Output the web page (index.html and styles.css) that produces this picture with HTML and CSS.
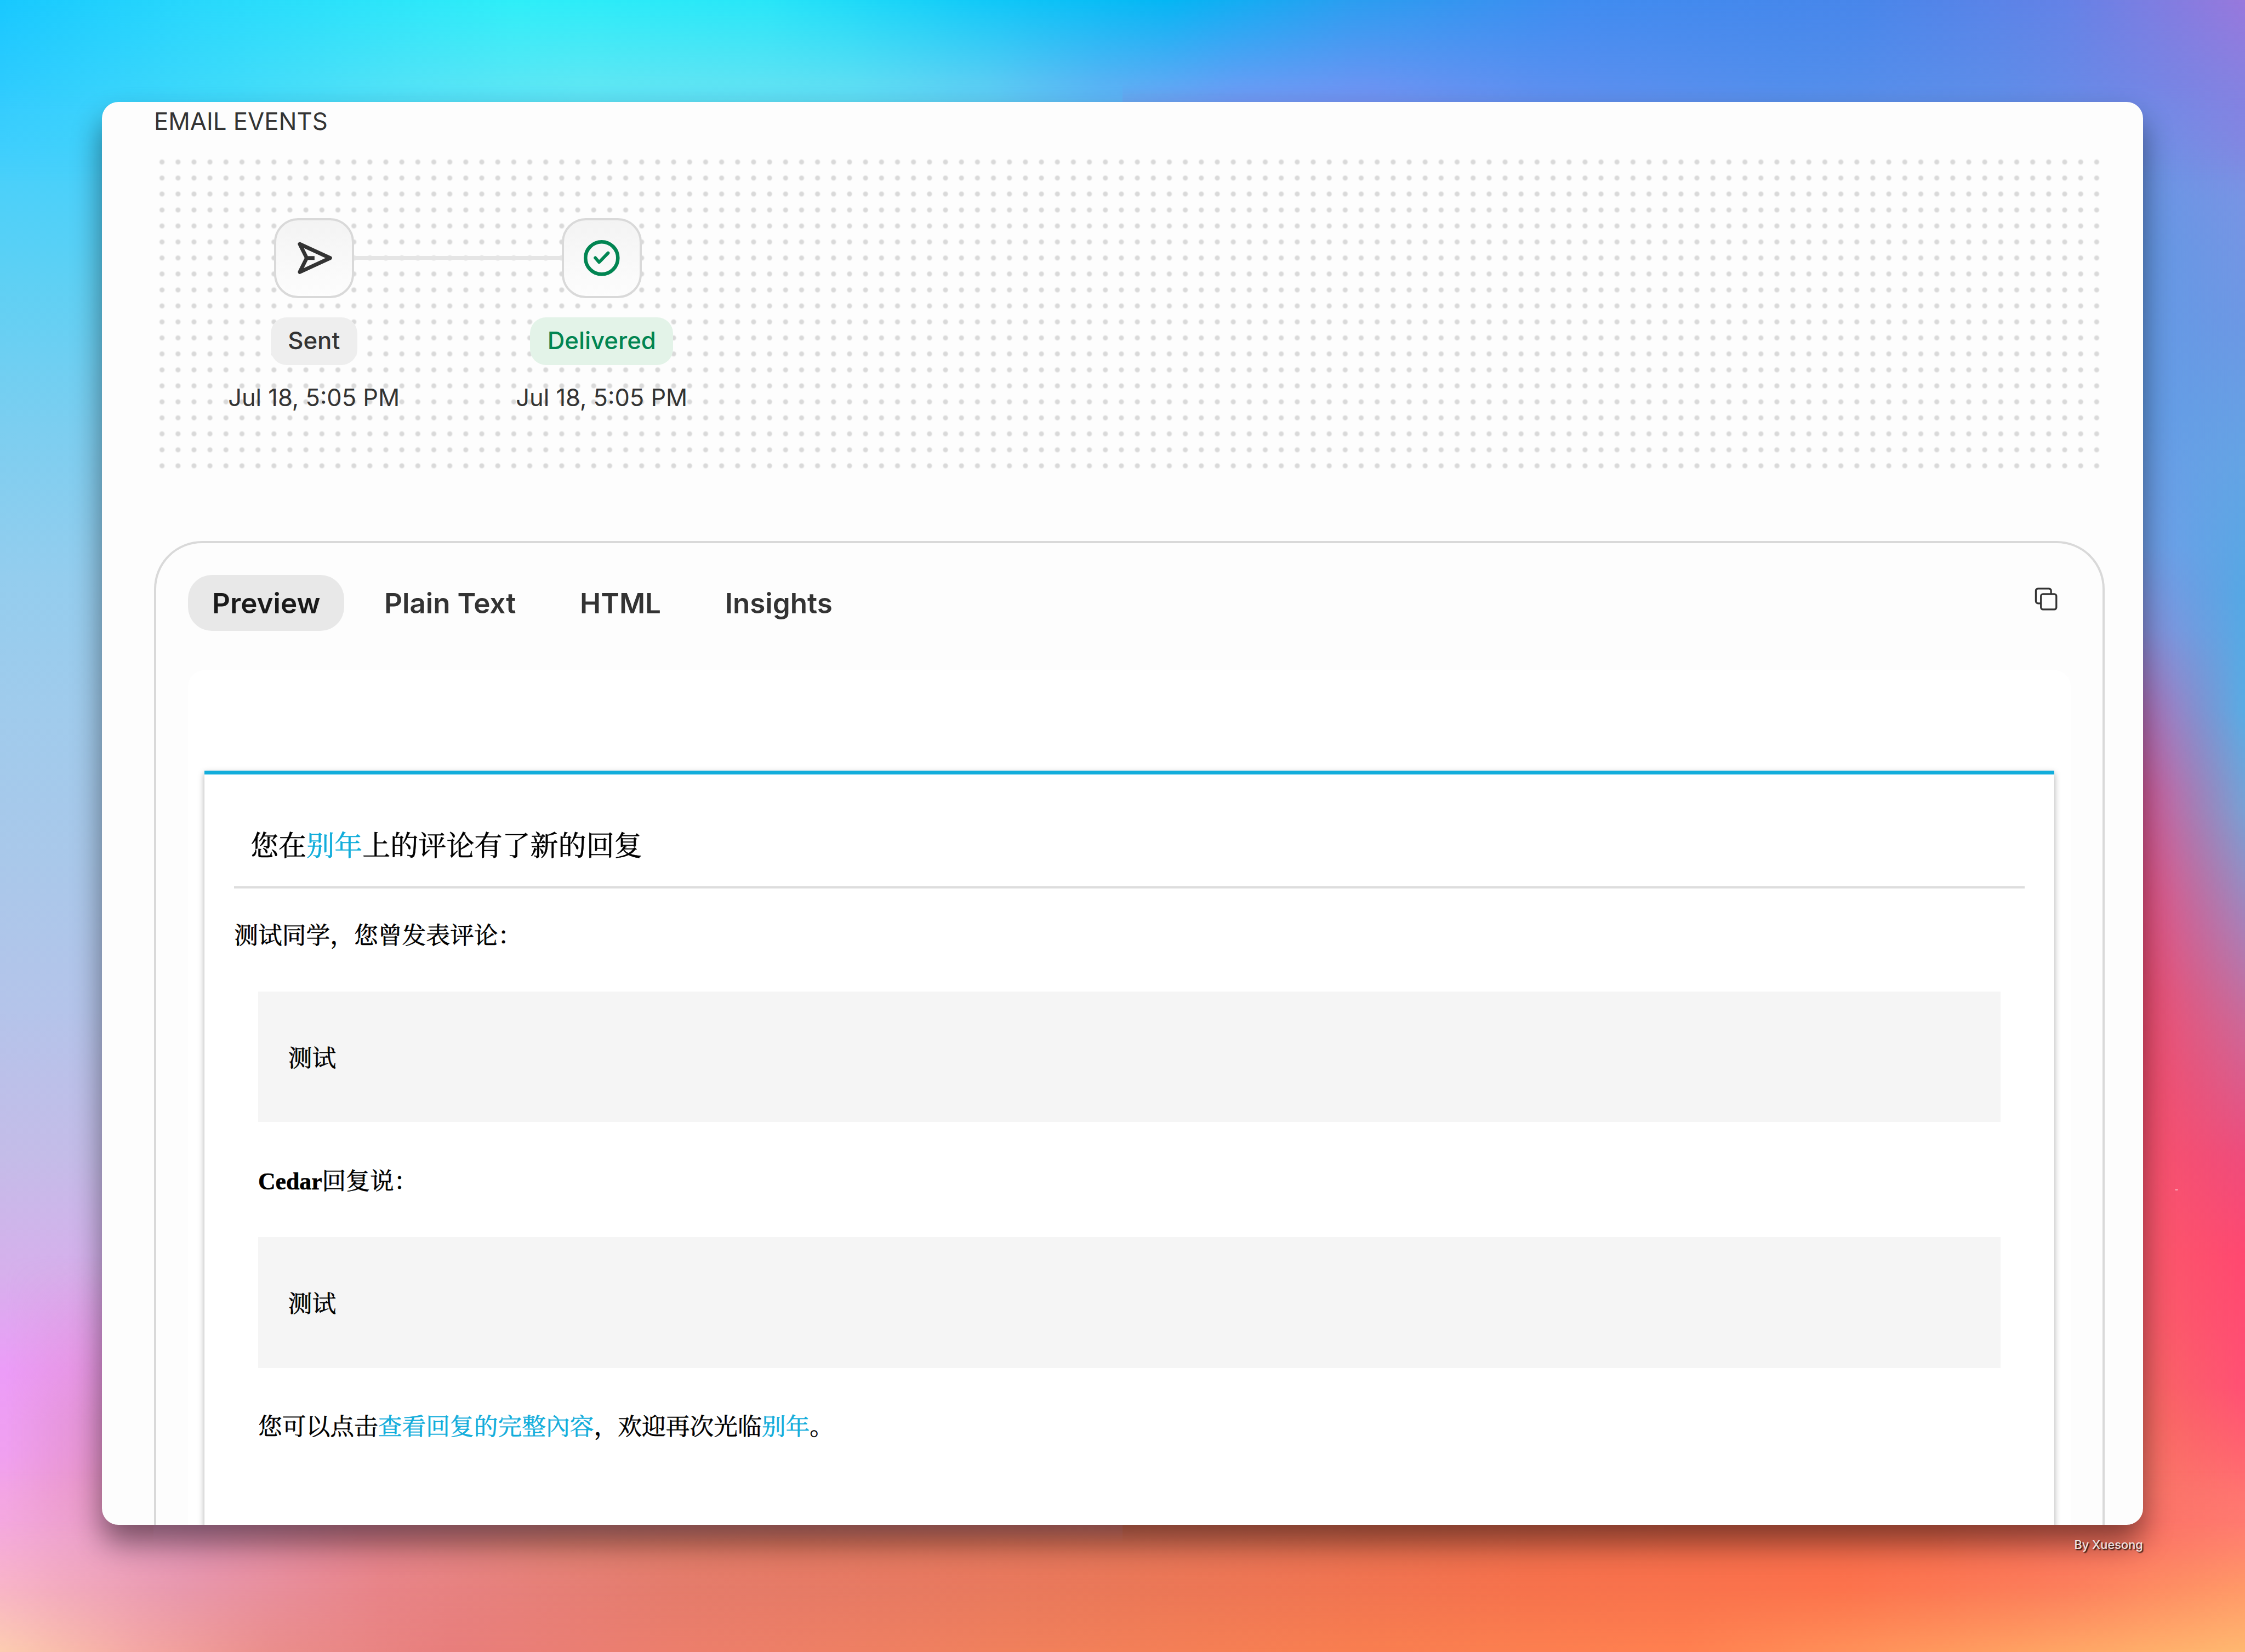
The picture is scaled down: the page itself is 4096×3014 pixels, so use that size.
FILE: index.html
```html
<!DOCTYPE html>
<html lang="zh-CN">
<head>
<meta charset="utf-8">
<title>Email events</title>
<link rel="stylesheet" href="styles.css">
</head>
<body>
<div class="backdrop">
  <div class="wash wash-left"></div>
  <div class="wash wash-left-inner"></div>
  <div class="wash wash-right"></div>
  <div class="wash wash-right-outer"></div>
  <div class="wash wash-top"></div>
  <div class="wash wash-top-edge"></div>
  <div class="wash wash-bottom"></div>
  <div class="wash wash-bottom-mid"></div>
  <div class="wash wash-bottom-edge"></div>
  <div class="speck"></div>
</div>

<main class="window">
  <h1 class="section-title">EMAIL EVENTS</h1>

  <section class="timeline">
    <div class="event">
      <div class="event-icon">
        <svg viewBox="0 0 24 24" fill="none" stroke="currentColor" stroke-width="1.9" stroke-linejoin="round" stroke-linecap="butt">
          <path d="M4.9 5 20.1 12 4.9 19 8.4 12ZM8.4 12H12.3"/>
        </svg>
      </div>
      <span class="badge">Sent</span>
      <time class="event-time">Jul 18, 5:05 PM</time>
    </div>
    <div class="event event-linked">
      <div class="event-icon event-icon-ok">
        <svg viewBox="0 0 24 24" fill="none" stroke="currentColor" stroke-width="1.8" stroke-linejoin="round" stroke-linecap="round">
          <circle cx="12" cy="12" r="8.1"/>
          <path d="M8.8 11.9 10.7 14.1 15.2 9.5" stroke-width="1.6"/>
        </svg>
      </div>
      <span class="badge badge-ok">Delivered</span>
      <time class="event-time">Jul 18, 5:05 PM</time>
    </div>
  </section>

  <section class="panel">
    <div class="panel-head">
      <nav class="tabs">
        <a class="tab tab-active">Preview</a>
        <a class="tab">Plain Text</a>
        <a class="tab">HTML</a>
        <a class="tab">Insights</a>
      </nav>
      <button class="copy" aria-label="Copy">
        <svg viewBox="0 0 24 24" fill="none" stroke="currentColor" stroke-width="0.9">
          <path d="M9.1 14.2H7.8A1.1 1.1 0 0 1 6.7 13.1V7.9A1.1 1.1 0 0 1 7.8 6.8H13.2A1.1 1.1 0 0 1 14.3 7.9V9.5"/>
          <rect x="9.25" y="9.55" width="7.7" height="7.7" rx="1"/>
        </svg>
      </button>
    </div>

    <div class="frame">
      <article class="mail">
        <h2 class="mail-title">您在<a class="link">别年</a>上的评论有了新的回复</h2>
        <div class="mail-body">
          <p class="line">测试同学，您曾发表评论：</p>
          <div class="quote">测试</div>
          <p class="line line-inset"><strong>Cedar</strong>回复说：</p>
          <div class="quote">测试</div>
          <p class="line line-inset">您可以点击<a class="link">查看回复的完整內容</a>，欢迎再次光临<a class="link">别年</a>。</p>
        </div>
      </article>
    </div>
  </section>
</main>
<footer class="credit">By Xuesong</footer>
</body>
</html>
```

FILE: styles.css
```css
/* 1rem is ten interface pixels */
html {
  font-size: 36.466px;
}

* {
  box-sizing: border-box;
}

body {
  position: relative;
  width: 4096px;
  height: 3014px;
  margin: 0;
  padding: 186.2px 186.2px 0;
  overflow: hidden;
  font-family: Inter, "Noto Sans CJK SC", sans-serif;
  color: #333;
}

h1, h2, p {
  margin: 0;
  font-weight: 400;
}

/* ---------- wallpaper ---------- */
.backdrop,
.wash {
  position: absolute;
  inset: 0;
}

.wash-left {
  background: linear-gradient(to bottom,
    #28ccff 0%, #44d0fc 9%, #5ed0f4 17%, #7ccef0 26%, #94cdee 35%, #a0cbec 43%,
    #a9c8ea 52%, #b4c4ea 61%, #c4bce8 70%, #d6b0ec 77%, #ec9cf8 83%, #f0a0f0 88%,
    #f6a8dc 93%, #fcb8c8 97%, #fccab2 100%);
}

.wash-left-inner {
  right: auto;
  width: 280px;
  background: linear-gradient(to bottom, rgba(224, 132, 180, 0) 76%, #dc8cc0 86%, #e48cae 92%, #e89098 100%);
  mask-image: linear-gradient(to right, transparent 10px, #000 270px);
}

.wash-right {
  left: 50%;
  background: linear-gradient(to bottom,
    #7484e4 0%, #7092e6 6%, #6498e4 15%, #649ce6 25%, #709ee8 33%, #8890dc 38%,
    #b470b8 43%, #d45a98 48%, #e65080 54%, #ee4c70 60%, #f44e6c 66%, #fa546c 72%,
    #fa5e68 80%, #f86c62 86%, #fa7868 91%, #ff8868 95%, #ffa468 100%);
}

.wash-right-outer {
  left: auto;
  width: 190px;
  background: linear-gradient(to bottom,
    #a078dc 0%, #8a80e0 6%, #7894e4 12%, #6c98e4 20%, #64a4e4 28%, #55a8e4 36%,
    #58ace4 43%, #78a0d4 49%, #a880b8 56%, #cc6898 62%, #ee4c7c 70%, #ff4870 76%,
    #ff5074 84%, #ff6470 88%, #ff7c72 92%, #ff9470 95%, #ffb46c 100%);
  mask-image: linear-gradient(to right, transparent, #000);
}

.wash-top,
.wash-top-edge {
  bottom: auto;
  height: 330px;
}

.wash-top {
  background: linear-gradient(to right,
    #34ccfe 0%, #44dbfa 10%, #5ce2f6 18%, #6ce6f3 26%, #6fdff2 38%, #70cdf2 44%,
    #70b0f4 49%, #7a9af6 55%, #7a92f4 61%, #6290f0 69%, #5590ec 80%, #5f8fe9 89%,
    #7088e6 95%, #8284e2 100%);
  mask-image: linear-gradient(to bottom, #000 45%, transparent);
}

.wash-top-edge {
  height: 200px;
  background: linear-gradient(to right,
    #18c8ff 0%, #28d8fc 9%, #2eeef8 23%, #28e6f8 34%, #10c8f8 44%, #04b6f4 52%,
    #2a9ef0 60%, #3f8cf0 70%, #4886ea 83%, #6482e6 92%, #9878dc 100%);
  mask-image: linear-gradient(to bottom, #000, transparent);
}

.wash-bottom,
.wash-bottom-mid,
.wash-bottom-edge {
  top: auto;
}

.wash-bottom {
  height: 330px;
  background: linear-gradient(to right,
    #f4a8e0 0%, #eaa0cc 4%, #da8eb4 9%, #dc8090 16%, #de8070 25%, #e07860 35%,
    #e2745a 50%, #e46c4e 62%, #ee684a 75%, #f2684c 86%, #fa6e64 95%, #ff7870 100%);
  mask-image: linear-gradient(to bottom, transparent, #000 40%);
}

.wash-bottom-mid {
  height: 240px;
  background: linear-gradient(to right,
    #f8b4c8 0%, #e898ae 8%, #e88488 17%, #e47c6c 30%, #ea7858 50%, #f6724c 68%,
    #fc724c 82%, #fc7e5c 92%, #ff9868 100%);
  mask-image: linear-gradient(to bottom, transparent, #000 50%);
}

.wash-bottom-edge {
  height: 120px;
  background: linear-gradient(to right,
    #fcccb0 0%, #f4a8a4 6%, #ea8e8c 12%, #e87e7c 20%, #ec7e6c 30%, #f0805c 45%,
    #f87e50 60%, #ff8050 75%, #ff9c60 88%, #ffb870 100%);
  mask-image: linear-gradient(to bottom, transparent, #000);
}

.speck {
  position: absolute;
  left: 3968px;
  top: 2169px;
  width: 6px;
  height: 3px;
  border-radius: 50%;
  background: rgba(255, 255, 255, 0.4);
}

/* ---------- window ---------- */
.window {
  position: relative;
  height: 2595.4px;
  padding: 0 1.915rem 0 2.6rem;
  overflow: hidden;
  border-radius: 30px;
  background: #fdfdfd;
  box-shadow: 0 32px 54px rgba(0, 0, 0, 0.47);
}

.section-title {
  padding-top: 0.19rem;
  font-size: 1.2rem;
  line-height: 1.6rem;
}

.timeline {
  display: flex;
  height: 16rem;
  margin-top: 0.81rem;
  padding: 3.2rem 0.8rem 0;
  background: radial-gradient(circle, #d9d9d9 0.09rem, transparent 0.155rem) 0 0 / 0.8rem 0.8rem;
}

.event {
  position: relative;
  display: flex;
  flex-direction: column;
  align-items: center;
  width: 14.4rem;
}

.event-linked::before {
  content: "";
  position: absolute;
  top: 1.9rem;
  right: 9.2rem;
  width: 10.4rem;
  height: 0.2rem;
  background: #e5e5e5;
}

.event-icon {
  display: grid;
  place-items: center;
  width: 4rem;
  height: 4rem;
  border: 4px solid #d9d9d9;
  border-radius: 1.2rem;
  background: linear-gradient(#f3f3f3, #fdfdfd) border-box;
}

.event-icon svg {
  width: 2.4rem;
  height: 2.4rem;
}

.event-icon-ok {
  color: #018552;
}

.badge {
  height: 2.4rem;
  margin-top: 0.96rem;
  padding: 0 0.86rem;
  border-radius: 0.8rem;
  background: #eee;
  font-size: 1.2rem;
  font-weight: 500;
  line-height: 2.34rem;
}

.badge-ok {
  background: #e3f3e8;
  color: #018552;
}

.event-time {
  margin-top: 0.81rem;
  font-size: 1.19rem;
  line-height: 1.6rem;
}

/* ---------- preview panel ---------- */
.panel {
  height: 60rem;
  margin-top: 3.35rem;
  padding: 1.6rem 1.6rem 0;
  border: 4px solid #d9d9d9;
  border-radius: 2.4rem;
}

.panel-head {
  display: flex;
  align-items: flex-start;
  justify-content: space-between;
}

.tabs {
  display: flex;
  gap: 0.8rem;
}

.tab {
  padding: 0 1.2rem;
  border-radius: 1.2rem;
  font-size: 1.403rem;
  font-weight: 600;
  line-height: 2.8rem;
}

.tab-active {
  background: #e8e8e8;
  color: #1a1a1a;
}

.copy {
  width: 2.4rem;
  height: 2.4rem;
  padding: 0;
  border: 0;
  background: none;
  color: #333;
}

.copy svg {
  display: block;
  width: 2.4rem;
  height: 2.4rem;
}

.frame {
  height: 60rem;
  margin-top: 1.98rem;
  padding: 5rem 0.8rem 0;
  border-radius: 0.8rem;
  background: #fff;
}

/* ---------- mail ---------- */
.mail {
  height: 60rem;
  padding: 0 1.5rem;
  border-top: 0.2rem solid #12addb;
  background: #fff;
  box-shadow: 0 0.1rem 0.3rem #aaa;
  font-family: "Liberation Serif", "Songti SC", "Noto Serif CJK SC", "Noto Sans CJK SC", serif;
  font-size: 1.2rem;
  line-height: 1.8rem;
  color: #000;
  -webkit-text-stroke: 0.6px;
}

.mail-title {
  padding: 2.63rem 0.82rem 0.97rem;
  border-bottom: 4px solid #ddd;
  font-size: 1.4rem;
  line-height: 2rem;
}

.link {
  color: #12addb;
}

.mail-body {
  padding-top: 1.49rem;
}

.line-inset {
  padding: 0 1.2rem;
}

.quote {
  margin: 1.86rem 1.2rem 2.08rem;
  padding: 2.49rem 1.5rem 2.26rem;
  background: #f5f5f5;
}

/* ---------- signature under the window ---------- */
.credit {
  position: relative;
  margin-top: 20px;
  text-align: right;
  font-size: 21.8px;
  font-weight: 500;
  line-height: 32px;
  color: rgba(255, 255, 255, 0.85);
  text-shadow: 2px 2px 2px rgba(0, 0, 0, 0.85);
}
```
